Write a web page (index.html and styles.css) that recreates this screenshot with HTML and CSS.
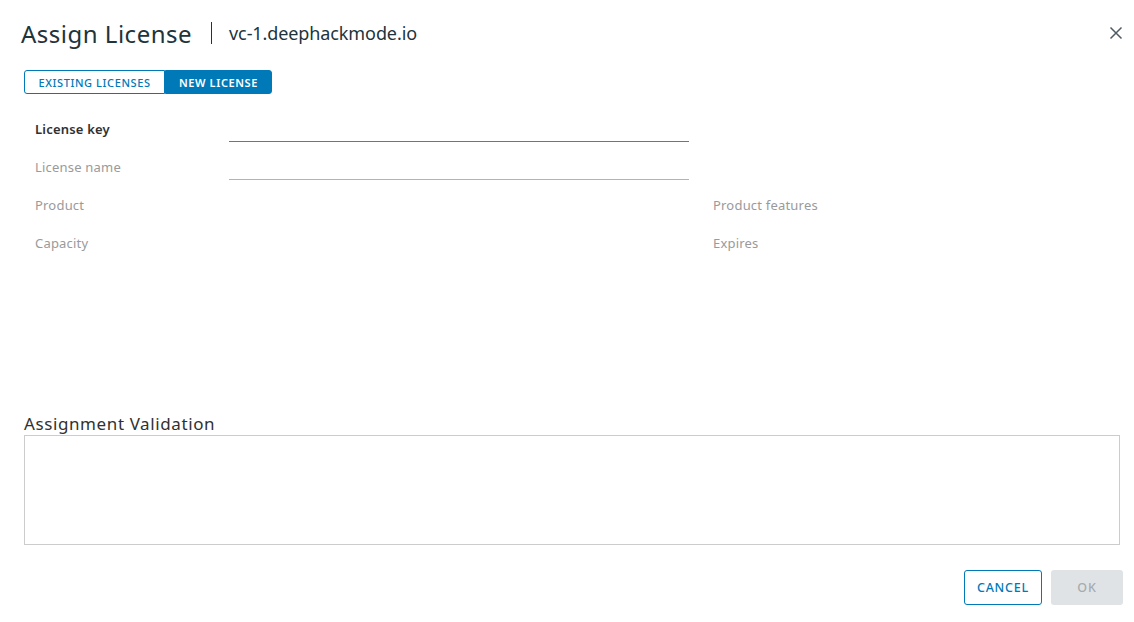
FILE: index.html
```html
<!DOCTYPE html>
<html>
<head>
<meta charset="utf-8">
<link rel="stylesheet" href="styles.css">
</head>
<body>
<div class="modal">
  <header class="head">
    <h1 class="title">Assign License</h1>
    <span class="divider"></span>
    <span class="subtitle">vc-1.deephackmode.io</span>
    <button class="close" aria-label="Close">
      <svg width="14" height="14" viewBox="0 0 14 14"><path d="M1.5 1.5 L12.5 12.5 M12.5 1.5 L1.5 12.5" stroke="#4f5b63" stroke-width="1.5" fill="none"/></svg>
    </button>
  </header>
  <div class="tabs">
    <button class="tab">EXISTING LICENSES</button>
    <button class="tab active">NEW LICENSE</button>
  </div>
  <div class="form">
    <div class="row">
      <label class="lbl strong">License key</label>
      <div class="input dark"></div>
    </div>
    <div class="row">
      <label class="lbl">License name</label>
      <div class="input"></div>
    </div>
    <div class="row">
      <label class="lbl">Product</label>
      <div class="spacer"></div>
      <label class="lbl right">Product features</label>
    </div>
    <div class="row">
      <label class="lbl">Capacity</label>
      <div class="spacer"></div>
      <label class="lbl right">Expires</label>
    </div>
  </div>
  <section class="validation">
    <h2 class="vtitle">Assignment Validation</h2>
    <div class="vbox"></div>
  </section>
  <footer class="foot">
    <button class="btn outline">CANCEL</button>
    <button class="btn disabled">OK</button>
  </footer>
</div>
</body>
</html>
```
FILE: styles.css
```css
* { box-sizing: border-box; }
html, body { margin: 0; padding: 0; background: #fff; }
body { font-family: "Noto Sans", "Liberation Sans", sans-serif; color: #313131; width: 1134px; height: 622px; overflow: hidden; }
.modal { padding: 0 11px 0 24px; }
.head { display: flex; align-items: center; height: 66px; margin-left: -3px; }
.title { font-size: 24px; font-weight: 400; margin: 0; color: #21333b; letter-spacing: 0.5px; }
.divider { width: 1px; height: 22px; background: #21333b; margin: 0 17px 0 19px; }
.subtitle { font-size: 18px; color: #21333b; letter-spacing: -0.1px; }
.close { margin-left: auto; background: none; border: 0; padding: 0; width: 14px; height: 14px; display: flex; margin-right: 0; }
.tabs { display: flex; margin-top: 4px; }
.tab { height: 24px; border: 1px solid #0079b8; background: #fff; color: #0079b8; font-family: inherit; font-size: 11px; font-weight: 500; letter-spacing: 0.6px; padding: 0; }
.tab:first-child { border-radius: 3px 0 0 3px; width: 141px; }
.tab.active { background: #0079b8; color: #fff; border-radius: 0 3px 3px 0; width: 107px; font-weight: 600; }
.form { padding: 16px 0 0 11px; }
.row { display: flex; align-items: center; height: 38px; }
.lbl { width: 194px; font-size: 13px; color: #9a9a9a; letter-spacing: 0.2px; }
.lbl.strong { color: #313131; font-weight: 600; }
.input { width: 460px; height: 24px; border-bottom: 1px solid #b3b3b3; margin-top: 1px; }
.input.dark { border-bottom-color: #6a7781; }
.spacer { width: 484px; }
.lbl.right { width: auto; }
.validation { margin-top: 151px; }
.vtitle { font-size: 17px; font-weight: 400; margin: 0; color: #313131; line-height: 22px; letter-spacing: 0.6px; }
.vbox { width: 1096px; height: 110px; border: 1px solid #ccc; }
.foot { display: flex; justify-content: flex-end; gap: 9px; margin-top: 25px; }
.btn { height: 35px; font-family: inherit; font-size: 12.5px; font-weight: 500; letter-spacing: 0.8px; border-radius: 3px; padding: 0; }
.btn.outline { width: 78px; border: 1px solid #0079b8; background: #fff; color: #0079b8; }
.btn.disabled { width: 72px; border: 0; background: #e0e3e5; color: #a6abaf; }
```
